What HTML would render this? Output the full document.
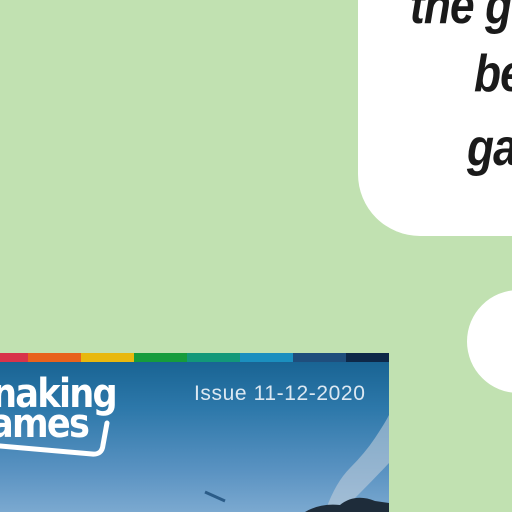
<!DOCTYPE html>
<html><head><style>
html,body{margin:0;padding:0}
body{width:512px;height:512px;background:#c1e1b1;position:relative;overflow:hidden;font-family:"Liberation Sans",sans-serif}
.box{position:absolute;left:358px;top:-20px;width:200px;height:256px;background:#fff;border-radius:0 0 0 62px}
.t{position:absolute;font-family:"Liberation Sans Narrow","Liberation Sans",sans-serif;font-weight:bold;font-style:italic;font-size:52px;color:#1a1a1a;white-space:nowrap;letter-spacing:-1px;transform:scaleX(.85);transform-origin:left top}
.pill{position:absolute;left:467px;top:290px;width:120px;height:103px;background:#fff;border-radius:52px}
.mag{position:absolute;left:0;top:353px;width:389px;height:159px;background:linear-gradient(#15608f 0%,#2d78aa 35%,#5b93c2 75%,#7ba9d0 100%);overflow:hidden}
.strip{position:absolute;left:0;top:0;height:9px;width:389px;display:flex}
.strip div{height:9px}
.issue{position:absolute;left:194px;top:29px;color:#dce8f2;font-size:21px;letter-spacing:.6px}
.logo{position:absolute;color:#fff;font-weight:bold;font-size:40px;line-height:30px;font-family:"DejaVu Sans","Liberation Sans",sans-serif;letter-spacing:-2px;transform:scaleX(.88);transform-origin:left top}
</style></head><body>
<div class="box"></div>
<div class="t" style="left:410px;top:-24px">the g</div>
<div class="t" style="left:474px;top:44px">be</div>
<div class="t" style="left:467px;top:118px">ga</div>
<div class="pill"></div>
<div class="mag">
 <div class="strip">
  <div style="width:28px;background:#d8334a"></div>
  <div style="width:53px;background:#e8621d"></div>
  <div style="width:53px;background:#e8b80e"></div>
  <div style="width:53px;background:#169c3c"></div>
  <div style="width:53px;background:#139879"></div>
  <div style="width:53px;background:#1b8fbf"></div>
  <div style="width:53px;background:#1f4e7c"></div>
  <div style="width:43px;background:#0e2848"></div>
 </div>
 <div class="logo" style="left:-8px;top:26px">naking</div>
 <div class="logo" style="left:-10px;top:56px">ames</div>
 <svg style="position:absolute;left:0;top:0" width="389" height="159"><path d="M0 93 L92 101 Q102 102 103 92 L107 70" fill="none" stroke="#fff" stroke-width="5" stroke-linecap="round"/>
 <path d="M325 159 Q335 130 350 115 Q365 100 375 85 Q385 70 389 62 L389 110 Q375 125 360 140 Q345 155 340 159Z" fill="#c6d2dc" opacity=".55"/>
 <path d="M305 159 Q320 150 340 152 Q355 140 375 148 L389 150 L389 159Z" fill="#1e2c3a"/>
 <path d="M205 139 L225 148" stroke="#2b5c88" stroke-width="3"/></svg>
 <div class="issue">Issue 11-12-2020</div>
</div>
</body></html>
